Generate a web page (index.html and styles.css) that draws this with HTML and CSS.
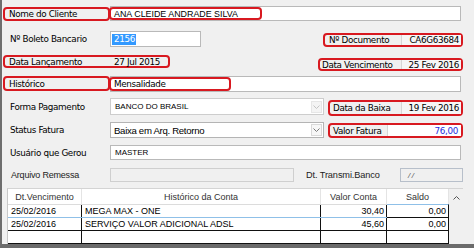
FILE: index.html
```html
<!DOCTYPE html>
<html lang="pt-BR">
<head>
<meta charset="utf-8">
<title>Fatura</title>
<link rel="stylesheet" href="styles.css">
</head>
<body>
<div class="window">
  <div class="row r1">
    <div class="tag lbl-main">Nome do Cliente</div>
    <div class="input in-full"><span class="mark mark-nome">ANA CLEIDE ANDRADE SILVA</span></div>
  </div>

  <div class="row r2">
    <div class="lbl">Nº Boleto Bancario</div>
    <div class="input in-boleto"><span class="sel">2156</span></div>
    <div class="tag tag-doc">
      <span class="t-lbl">Nº Documento</span>
      <span class="t-val">CA6G63684</span>
    </div>
  </div>

  <div class="row r3">
    <div class="tag tag-lanc">
      <span class="lanc-lbl">Data Lançamento</span>
      <span class="lanc-val">27 Jul 2015</span>
    </div>
    <div class="tag tag-venc">
      <span class="t-lbl">Data Vencimento</span>
      <span class="t-val">25 Fev 2016</span>
    </div>
  </div>

  <div class="row r4">
    <div class="tag lbl-main lbl-hist">Histórico</div>
    <div class="input in-full"><span class="mark mark-hist">Mensalidade</span></div>
  </div>

  <div class="row r5">
    <div class="lbl">Forma Pagamento</div>
    <div class="combo combo-off">
      <span class="arial8">BANCO DO BRASIL</span>
      <span class="drop drop-off"><svg width="7" height="4" viewBox="0 0 7 4"><path d="M0.5 0.5 L3.5 3.5 L6.5 0.5" fill="none" stroke="#c4c4c4"/></svg></span>
    </div>
    <div class="tag tag-baixa">
      <span class="t-lbl">Data da Baixa</span>
      <span class="t-val">19 Fev 2016</span>
    </div>
  </div>

  <div class="row r6">
    <div class="lbl">Status Fatura</div>
    <div class="combo">
      <span class="status-txt">Baixa em Arq. Retorno</span>
      <span class="drop"><svg width="7" height="4" viewBox="0 0 7 4"><path d="M0.5 0.5 L3.5 3.5 L6.5 0.5" fill="none" stroke="#7a7a7a"/></svg></span>
    </div>
    <div class="tag tag-valor">
      <span class="t-lbl">Valor Fatura</span>
      <span class="t-val v-white">76,00</span>
    </div>
  </div>

  <div class="row r7">
    <div class="lbl">Usuário que Gerou</div>
    <div class="input in-full in-user"><span class="arial8">MASTER</span></div>
  </div>

  <div class="row r8">
    <div class="lbl lbl-arial">Arquivo Remessa</div>
    <div class="input in-off in-arq"></div>
    <div class="dt-lbl">Dt. Transmi.Banco</div>
    <div class="input in-off in-dt"><span>/ /</span></div>
  </div>

  <div class="grid">
    <div class="table">
      <div class="tr th">
        <div class="c">Dt.Vencimento</div>
        <div class="c">Histórico da Conta</div>
        <div class="c">Valor Conta</div>
        <div class="c">Saldo</div>
      </div>
      <div class="tr td first">
        <div class="c">25/02/2016</div>
        <div class="c">MEGA MAX - ONE</div>
        <div class="c num">30,40</div>
        <div class="c num">0,00</div>
      </div>
      <div class="tr td">
        <div class="c">25/02/2016</div>
        <div class="c">SERVIÇO VALOR ADICIONAL ADSL</div>
        <div class="c num">45,60</div>
        <div class="c num">0,00</div>
      </div>
      <div class="tr td">
        <div class="c"></div>
        <div class="c"></div>
        <div class="c"></div>
        <div class="c"></div>
      </div>
    </div>
    <div class="scroll">
      <svg width="7" height="4" viewBox="0 0 7 4"><path d="M0.5 3.5 L3.5 0.5 L6.5 3.5" fill="none" stroke="#555"/></svg>
    </div>
  </div>
</div>
</body>
</html>
```

FILE: styles.css
```css
* { box-sizing: border-box; margin: 0; padding: 0; }

body {
  width: 474px;
  height: 248px;
  overflow: hidden;
  background: #f0f0f0;
}

.window {
  width: 474px;
  height: 248px;
  background: #f0f0f0;
  border-left: 2px solid #6e6e6e;
  border-bottom: 4px solid #6b6b6b;
  padding-left: 1px;
  padding-top: 6px;
  font-family: "DejaVu Sans", sans-serif;
  font-size: 8.8px;
  letter-spacing: -0.35px;
  color: #000;
}

.row {
  display: flex;
  align-items: center;
  width: 460px;
}

.r1 { height: 15px; }
.r2 { height: 16px; margin-top: 10px; }
.r3 { height: 16px; margin-top: 8px; justify-content: space-between; }
.r4 { height: 16px; margin-top: 5px; }
.r5 { height: 18px; margin-top: 6px; }
.r6 { height: 16px; margin-top: 6px; }
.r7 { height: 15px; margin-top: 7px; }
.r8 { height: 14px; margin-top: 8px; }

.tag {
  display: flex;
  align-items: center;
  border: 2px solid #d81920;
  border-radius: 4px;
  white-space: nowrap;
}

.lbl-main {
  width: 107px;
  height: 14px;
  padding-left: 4px;
}

.lbl-hist {
  height: 15px;
  align-self: flex-start;
}

.lbl {
  width: 107px;
  padding-left: 7px;
  white-space: nowrap;
}

.lbl-arial {
  padding-left: 8px;
  font-family: "Liberation Sans", Arial, sans-serif;
  font-size: 9px;
  letter-spacing: -0.2px;
  color: #222;
}

.input {
  display: flex;
  align-items: center;
  height: 100%;
  background: #fff;
  border: 1px solid #b9b9b9;
  white-space: nowrap;
}

.in-full { width: 351px; }

.mark {
  display: flex;
  align-items: center;
  height: 100%;
  margin-left: -2px;
  padding-left: 3px;
  border: 2px solid #d81920;
  border-radius: 4px;
}

.mark-nome {
  width: 153px;
  font-family: "Liberation Sans", Arial, sans-serif;
  font-size: 8.9px;
  letter-spacing: 0;
}

.mark-hist { width: 122px; }

.in-boleto {
  width: 91px;
  padding-left: 1px;
}

.sel {
  background: #3399ff;
  color: #fff;
  padding: 0 1px 0 2px;
  line-height: 11px;
}

.t-lbl {
  flex: 1;
  padding-left: 4px;
}

.t-val {
  display: flex;
  align-items: center;
  justify-content: flex-end;
  width: 60px;
  height: 100%;
  padding-right: 2px;
  background: #f6f6f6;
  border-left: 1px solid #d6d6d6;
}

.tag-doc {
  margin-left: auto;
  width: 140px;
  height: 14px;
  align-self: flex-end;
}

.tag-lanc {
  width: 167px;
  height: 13px;
  align-self: flex-start;
}

.lanc-lbl {
  width: 105px;
  padding-left: 4px;
}

.lanc-val { padding-left: 4px; }

.tag-venc {
  width: 145px;
  height: 13px;
  align-self: flex-end;
}

.tag-venc .t-lbl { padding-left: 2px; }

.tag-baixa {
  margin-left: auto;
  width: 135px;
  height: 16px;
  align-self: flex-end;
}

.tag-baixa .t-lbl,
.tag-valor .t-lbl { padding-left: 3px; }

.tag-valor {
  margin-left: auto;
  width: 135px;
  height: 15px;
  align-self: flex-end;
}

.tag-valor .t-val.v-white {
  width: 74px;
  background: #fff;
  color: #1f2ee0;
  padding-right: 3px;
}

.combo {
  display: flex;
  align-items: center;
  justify-content: space-between;
  width: 214px;
  height: 100%;
  padding-left: 3px;
  padding-right: 1px;
  background: #fff;
  border: 1px solid #b4b4b4;
  white-space: nowrap;
}

.combo-off {
  height: 17px;
  align-self: flex-start;
  border-color: #cdcdcd;
}

.arial8 {
  font-family: "Liberation Sans", Arial, sans-serif;
  font-size: 8px;
  letter-spacing: 0;
  padding-left: 1px;
}

.status-txt {
  font-family: "Liberation Sans", Arial, sans-serif;
  font-size: 9.6px;
  letter-spacing: -0.3px;
}

.drop {
  display: flex;
  align-items: center;
  justify-content: center;
  width: 11px;
  height: 12px;
  border: 1px solid #d9d9d9;
  background: #f7f7f7;
}

.drop-off {
  border-color: #e6e6e6;
  background: #f4f4f4;
}

.in-user { padding-left: 3px; }

.in-off {
  background: #f0f0f0;
  border-color: #cfcfcf;
}

.in-arq { width: 184px; }

.dt-lbl {
  margin-left: 12px;
  width: 94px;
  font-family: "Liberation Sans", Arial, sans-serif;
  font-size: 9.2px;
  letter-spacing: -0.1px;
  color: #222;
  white-space: nowrap;
}

.in-dt {
  width: 63px;
  padding-left: 7px;
  border-color: #b7bfca;
  font-family: "Liberation Sans", Arial, sans-serif;
  font-size: 8px;
  font-style: italic;
  color: #555;
}

.grid {
  display: flex;
  margin-top: 6px;
  margin-left: 4px;
  width: 456px;
  height: 56px;
  background: #fff;
  border-left: 1px solid #c8c8c8;
  border-top: 1px solid #d4d4d4;
  font-family: "Liberation Sans", Arial, sans-serif;
  font-size: 9px;
  letter-spacing: 0;
}

.table {
  width: 441px;
  background: #fff;
}

.tr {
  display: grid;
  grid-template-columns: 74px 239px 66px 62px;
}

.th {
  height: 16px;
  border-bottom: 1px solid #dcdcdc;
  color: #333;
}

.th .c {
  display: flex;
  align-items: center;
  justify-content: center;
  border-right: 1px solid #e4e4e4;
}

.td {
  height: 13px;
  border-bottom: 1px solid #111;
}

.td .c {
  display: flex;
  align-items: center;
  padding-left: 3px;
  border-right: 1px solid #111;
  white-space: nowrap;
  overflow: hidden;
}

.td .c.num {
  justify-content: flex-end;
  padding-right: 2px;
}

.td.first { border-bottom-color: #8fc0e8; }
.td.first .c:last-child {
  border-top: 1px solid #8fc0e8;
  border-bottom: 1px solid #111;
  margin-top: -1px;
  margin-bottom: -1px;
}

.scroll {
  width: 14px;
  display: flex;
  justify-content: center;
  padding-top: 7px;
  background: #f0f0f0;
}
```
